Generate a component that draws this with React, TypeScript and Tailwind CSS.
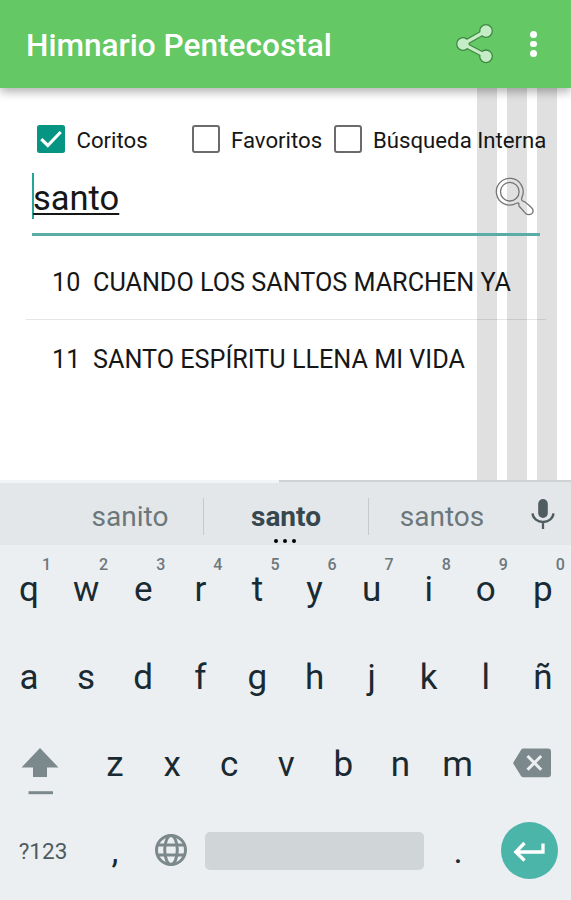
const topRow = ["q", "w", "e", "r", "t", "y", "u", "i", "o", "p"];
const middleRow = ["a", "s", "d", "f", "g", "h", "j", "k", "l", "ñ"];
const bottomRow = ["z", "x", "c", "v", "b", "n", "m"];

const hymns = [
  { number: 10, title: "CUANDO LOS SANTOS MARCHEN YA" },
  { number: 11, title: "SANTO ESPÍRITU LLENA MI VIDA" },
];

const ShareIcon = () => (
  <svg width="42" height="44" viewBox="0 0 42 44" fill="none">
    <path d="M32 9 9 22l23 12" stroke="#3f8745" strokeWidth="5.6" />
    <g fill="#c5edc5" stroke="#3f8745" strokeWidth="1.3">
      <circle cx="32" cy="9" r="6.3" />
      <circle cx="9" cy="22" r="6.3" />
      <circle cx="32" cy="34.3" r="6.3" />
    </g>
    <path d="M32 9 9 22l23 12" stroke="#c5edc5" strokeWidth="3.2" />
  </svg>
);

const SearchIcon = () => (
  <svg width="40" height="40" viewBox="0 0 40 40" fill="none" stroke="#757575" strokeWidth="1.3">
    <circle cx="14.8" cy="14.7" r="9.3" />
    <path
      d="M21.500 26.300A13.400 13.400 0 1 1 26.800 20.600Q25.800 23.600 28.500 24.300Q30.500 24.500 37 31.200Q39.200 34 37 36.400Q33.800 39 30.600 36.400L24.200 29.200Q23.500 27.500 24 26.600Q23 25.200 21.500 26.300Z"
      strokeLinejoin="round"
    />
  </svg>
);

const MicIcon = () => (
  <svg width="24" height="32" viewBox="0 0 24 32" fill="none">
    <rect x="7.2" y="1" width="9.6" height="19" rx="4.8" fill="#4f5c61" />
    <path d="M1.500 15.300c.5 5.200 5.100 8.700 10.500 8.700s10-3.500 10.500-8.700M12 24v7" stroke="#4f5c61" strokeWidth="2.300" />
  </svg>
);

const ShiftIcon = () => (
  <svg width="40" height="50" viewBox="0 0 40 50" fill="#7c898c">
    <path d="M20 1 1.500 20.500H13v9.500h14v-9.500h11.500z" />
    <path d="M8.500 44.200H33v3H8.500z" />
  </svg>
);

const BackspaceIcon = () => (
  <svg width="40" height="30" viewBox="0 0 40 30">
    <path d="M11.500.5H36a3 3 0 0 1 3 3v22.800a3 3 0 0 1-3 3H11.500a3 3 0 0 1-2.500-1.400L1 15l8-13.100A3 3 0 0 1 11.500.5z" fill="#7c898c" />
    <path d="m15.500 8 13.700 13.700M29.200 8 15.500 21.700" stroke="#eceff1" strokeWidth="3" />
  </svg>
);

const GlobeIcon = () => (
  <svg width="34" height="34" viewBox="0 0 34 34" fill="none" stroke="#7c898c" strokeWidth="3">
    <circle cx="17" cy="17" r="14.500" />
    <ellipse cx="17" cy="17" rx="6.300" ry="14.500" />
    <path d="M3.500 12h27M3.500 22h27" />
  </svg>
);

const EnterIcon = () => (
  <svg width="57" height="57" viewBox="0 0 57 57" fill="none" stroke="white" strokeWidth="3.300">
    <path d="M42 21.500v8.500H15M23.500 21l-8.700 9 8.700 8.500" />
  </svg>
);

const Checkbox = ({ label, checked, className }: { label: string; checked?: boolean; className: string }) => (
  <label className={`flex items-center ${className}`}>
    {checked ? (
      <svg width="28" height="28" viewBox="0 0 28 28" className="shrink-0">
        <rect width="28" height="28" rx="2.500" fill="#079583" />
        <path d="m4.300 14.200 6.500 6.300L23.700 7" fill="none" stroke="white" strokeWidth="3.200" />
      </svg>
    ) : (
      <span className="size-7 shrink-0 rounded-[3px] border-[2.500px] border-[#6b6b6b] bg-transparent" />
    )}
    <span className="ml-[11.5px] pt-0.5 text-[22.2px] leading-[26px] whitespace-nowrap">{label}</span>
  </label>
);

const Key = ({ letter, hint }: { letter: string; hint?: string }) => (
  <div className="relative flex h-full w-[57.1px] items-center justify-center pt-[4px] pl-px text-[35px] text-[#192a33]">
    {letter}
    {hint && <span className="absolute top-[10px] left-[42px] text-base leading-5 font-medium text-[#6d787c]">{hint}</span>}
  </div>
);

const Keyboard = () => (
  <section className="h-[420px] bg-[#eceff1]">
    <div className="relative flex h-[65px] items-center bg-[#e4e7e9] pt-[7px] text-[28px] text-[#6b777b]">
      <div className="absolute top-0 left-0 h-[3px] w-[279px] bg-[#f2f4f5]" />
      <div className="absolute top-0 right-0 h-0.5 w-[292px] bg-[#cfd1d2]" />
      <div className="ml-[57px] w-[146px] pt-0.5 text-center">sanito</div>
      <div className="h-[37px] w-px bg-[#c5cacc]" />
      <div className="relative w-[164px] pt-0.5 text-center font-bold text-[#37474f]">
        santo
        <span className="absolute -bottom-[4.500px] left-[70px] flex gap-[5px]">
          <i className="size-1 rounded-full bg-black" />
          <i className="size-1 rounded-full bg-black" />
          <i className="size-1 rounded-full bg-black" />
        </span>
      </div>
      <div className="h-[37px] w-px bg-[#c5cacc]" />
      <div className="w-[146px] pt-0.5 text-center">santos</div>
      <div className="ml-4 pb-1">
        <MicIcon />
      </div>
    </div>
    <div className="flex h-[87.3px]">
      {topRow.map((letter, i) => (
        <Key key={letter} letter={letter} hint={String((i + 1) % 10)} />
      ))}
    </div>
    <div className="flex h-[87.3px]">
      {middleRow.map((letter) => (
        <Key key={letter} letter={letter} />
      ))}
    </div>
    <div className="flex h-[87.3px] items-center">
      <div className="w-[86px] pt-[17px] pl-5">
        <ShiftIcon />
      </div>
      {bottomRow.map((letter) => (
        <Key key={letter} letter={letter} />
      ))}
      <div className="pl-[26px]">
        <BackspaceIcon />
      </div>
    </div>
    <div className="flex h-[87.3px] items-center">
      <div className="w-[86px] pt-0.5 text-center text-[22.5px] text-[#4d5b61]">?123</div>
      <Key letter="," />
      <div className="flex w-[56px] justify-center pb-0.5">
        <GlobeIcon />
      </div>
      <div className="mr-[5px] ml-[6px] h-[38px] w-[219px] rounded-[5px] bg-[#d0d5d8]" />
      <Key letter="." />
      <div className="ml-[14.500px] size-[57px] rounded-full bg-[#4cb5aa]">
        <EnterIcon />
      </div>
    </div>
  </section>
);

const App = () => {
  return (
    <div className="flex h-[900px] w-[571px] flex-col overflow-hidden bg-white font-[Roboto,sans-serif]">
      <header className="relative z-10 flex h-[88px] items-center bg-[#64c864] pl-[26px] shadow-[0_4px_9px_rgba(0,0,0,0.3)]">
        <h1 className="w-[427.500px] pt-[3px] text-[31.600px] font-medium text-white">Himnario Pentecostal</h1>
        <ShareIcon />
        <div className="ml-[34.500px] flex flex-col gap-[3px]">
          <span className="size-[6.500px] rounded-full bg-white" />
          <span className="size-[6.500px] rounded-full bg-white" />
          <span className="size-[6.500px] rounded-full bg-white" />
        </div>
      </header>

      <main className="relative h-[392px] text-[#161616]">
        {/* background stripes */}
        <div className="absolute inset-y-0 right-[14px] flex gap-[10px]">
          <div className="w-5 bg-[#e0e0e0]" />
          <div className="w-5 bg-[#e0e0e0]" />
          <div className="w-5 bg-[#e0e0e0]" />
        </div>

        <div className="relative">
          <div className="flex pt-[37px] pl-[37px]">
            <Checkbox label="Coritos" checked className="w-[154.500px]" />
            <Checkbox label="Favoritos" className="w-[142px]" />
            <Checkbox label="Búsqueda Interna" className="" />
          </div>

          <div className="mt-[18px] ml-8 flex h-[65px] w-[508px] justify-between border-b-[3px] border-[#5aada6]">
            <div className="flex">
              <div className="mt-0.5 h-[46px] w-0.5 bg-[#26a69a]" />
              <div className="-ml-px pt-[7px] text-[34.500px] leading-10">
                <span className="underline decoration-2 underline-offset-[3px]">santo</span>
              </div>
            </div>
            <div className="mr-[5px] pt-[6px]">
              <SearchIcon />
            </div>
          </div>

          <ul className="mx-[26px] w-[520px] text-[25.200px]">
            {hymns.map((hymn) => (
              <li key={hymn.number} className="flex h-[77px] items-center border-b-[1.500px] border-black/10 pt-0.5 pl-[26px] first:h-[84px] first:pt-[10px] last:border-b-0">
                <span className="w-[41px]">{hymn.number}</span>
                <span className="whitespace-nowrap">{hymn.title}</span>
              </li>
            ))}
          </ul>
        </div>
      </main>

      <Keyboard />
    </div>
  );
};

export default App;
